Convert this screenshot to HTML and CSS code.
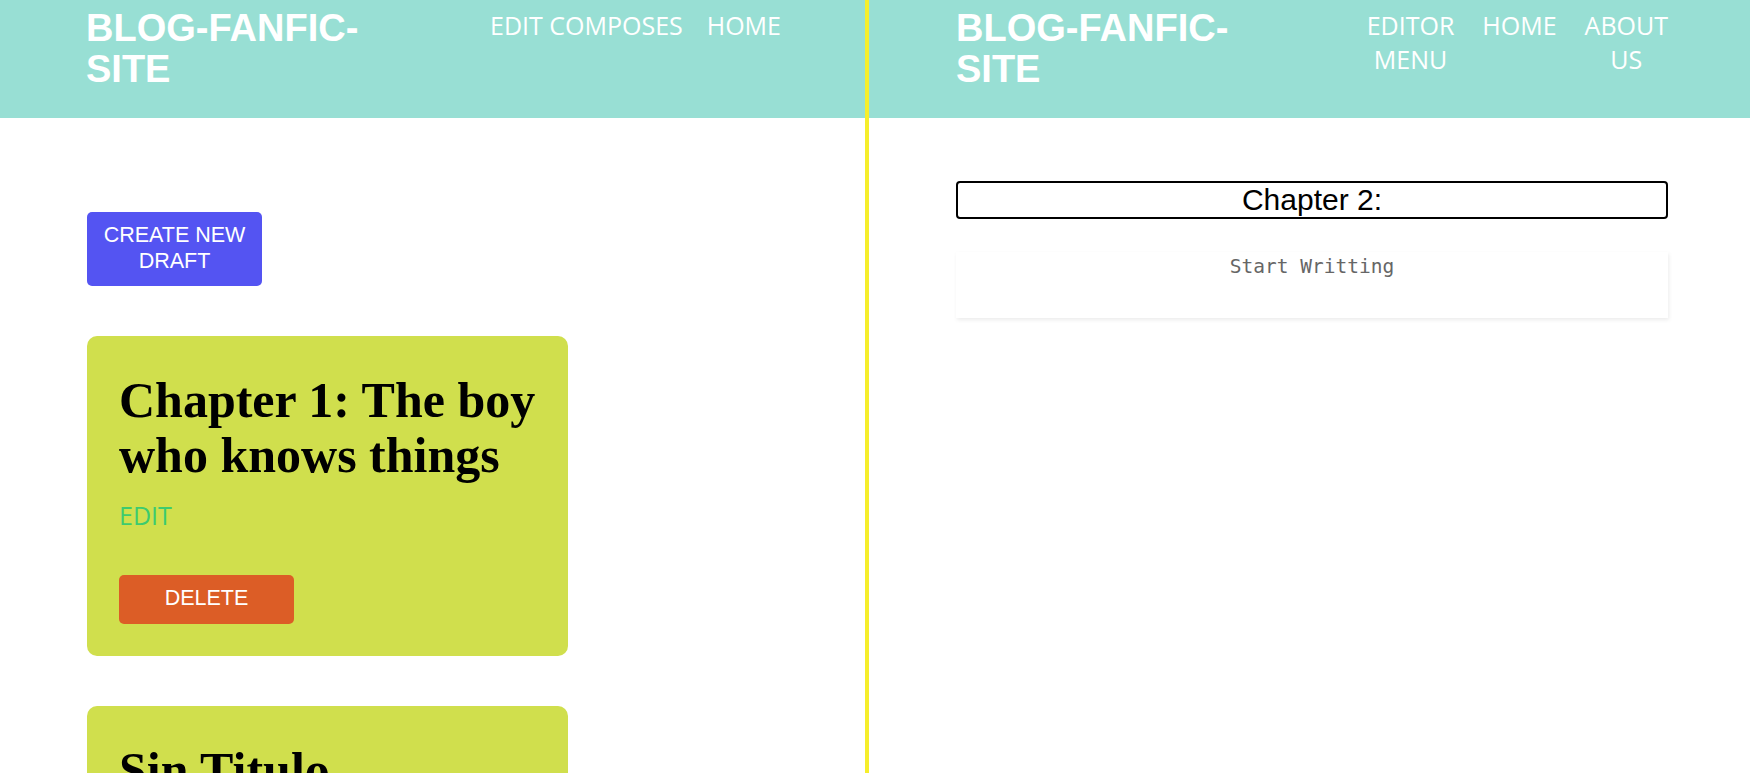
FILE: index.html
```html
<!DOCTYPE html>
<html lang="en">
<head>
<meta charset="utf-8">
<title>Blog Fanfic Site</title>
<link rel="stylesheet" href="styles.css">
</head>
<body>
<div class="screen">
  <section class="pane pane-left">
    <header class="topbar">
      <div class="brand">BLOG-FANFIC-SITE</div>
      <nav class="nav">
        <a class="nav-link" href="#">EDIT COMPOSES</a>
        <a class="nav-link" href="#">HOME</a>
      </nav>
    </header>
    <main class="pane-body">
      <button class="btn btn-create">CREATE NEW DRAFT</button>
      <article class="card">
        <h1 class="card-title">Chapter 1: The boy who knows things</h1>
        <a class="card-edit" href="#">EDIT</a>
        <button class="btn btn-delete">DELETE</button>
      </article>
      <article class="card">
        <h1 class="card-title">Sin Titulo</h1>
        <a class="card-edit" href="#">EDIT</a>
        <button class="btn btn-delete">DELETE</button>
      </article>
    </main>
  </section>
  <div class="divider"></div>
  <section class="pane pane-right">
    <header class="topbar topbar-right">
      <div class="brand">BLOG-FANFIC-SITE</div>
      <nav class="nav nav-narrow">
        <a class="nav-link" href="#">EDITOR MENU</a>
        <a class="nav-link" href="#">HOME</a>
        <a class="nav-link" href="#">ABOUT US</a>
      </nav>
    </header>
    <main class="pane-body pane-body-right">
      <input class="chapter-input" type="text" value="Chapter 2:">
      <div class="editor">Start Writting</div>
    </main>
  </section>
</div>
</body>
</html>
```

FILE: styles.css
```css
* { box-sizing: border-box; }

html, body {
  margin: 0;
  padding: 0;
  height: 773px;
  overflow: hidden;
  background: #ffffff;
}

.screen {
  display: flex;
  width: 1750px;
  height: 773px;
}

.pane {
  background: #ffffff;
  overflow: hidden;
}

.pane-left { width: 865px; flex: 0 0 865px; }
.pane-right { flex: 1 1 auto; }

.divider {
  flex: 0 0 4px;
  background: #f6ee2b;
}

.topbar {
  height: 118px;
  background: #98dfd4;
  display: flex;
  justify-content: space-between;
  align-items: flex-start;
  padding: 8px 84px 0 86px;
}

.topbar-right {
  padding: 8px 82px 0 87px;
}

.brand {
  width: 290px;
  font-family: "Liberation Sans", Arial, sans-serif;
  font-weight: 700;
  font-size: 38px;
  line-height: 41px;
  color: #ffffff;
}

.nav {
  display: flex;
  gap: 24px;
}

.nav-narrow { gap: 28px; }

.nav-link {
  font-family: "Open Sans", sans-serif;
  font-size: 25px;
  line-height: 34px;
  color: #ffffff;
  text-decoration: none;
  text-align: center;
}

.nav-narrow .nav-link { width: min-content; }

.pane-body {
  padding: 94px 84px 0 87px;
}

.pane-body-right {
  padding: 63px 82px 0 87px;
}

.btn {
  display: block;
  width: 175px;
  border: none;
  border-radius: 5px;
  font-family: "Liberation Sans", Arial, sans-serif;
  font-size: 21.5px;
  color: #ffffff;
  text-align: center;
  cursor: pointer;
}

.btn-create {
  background: #5454f2;
  line-height: 26px;
  padding: 10px 8px 12px;
}

.card {
  width: 481px;
  margin-top: 50px;
  padding: 37px 26px 32px 32px;
  background: #d0df4d;
  border-radius: 10px;
}

.card-title {
  margin: 0;
  font-family: "Liberation Serif", "Times New Roman", serif;
  font-weight: 700;
  font-size: 50px;
  line-height: 55px;
  color: #000000;
}

.card-edit {
  display: block;
  margin-top: 15px;
  font-family: "Open Sans", sans-serif;
  font-size: 25px;
  line-height: 34px;
  color: #3ccb6f;
  text-decoration: none;
}

.btn-delete {
  margin-top: 43px;
  background: #dc5d26;
  line-height: 25px;
  padding: 11px 0 13px;
}

.chapter-input {
  display: block;
  width: 100%;
  height: 38px;
  margin: 0;
  padding: 0;
  border: 2px solid #000000;
  border-radius: 4px;
  font-family: "Liberation Sans", Arial, sans-serif;
  font-size: 30px;
  color: #000000;
  text-align: center;
  background: #ffffff;
  outline: none;
}

.editor {
  margin-top: 33px;
  height: 66px;
  padding: 5px 16px 0;
  font-family: "DejaVu Sans Mono", monospace;
  font-size: 19.5px;
  line-height: 20px;
  color: #666666;
  text-align: center;
  background: #ffffff;
  box-shadow: 1px 2px 4px rgba(0, 0, 0, 0.08);
}
```
